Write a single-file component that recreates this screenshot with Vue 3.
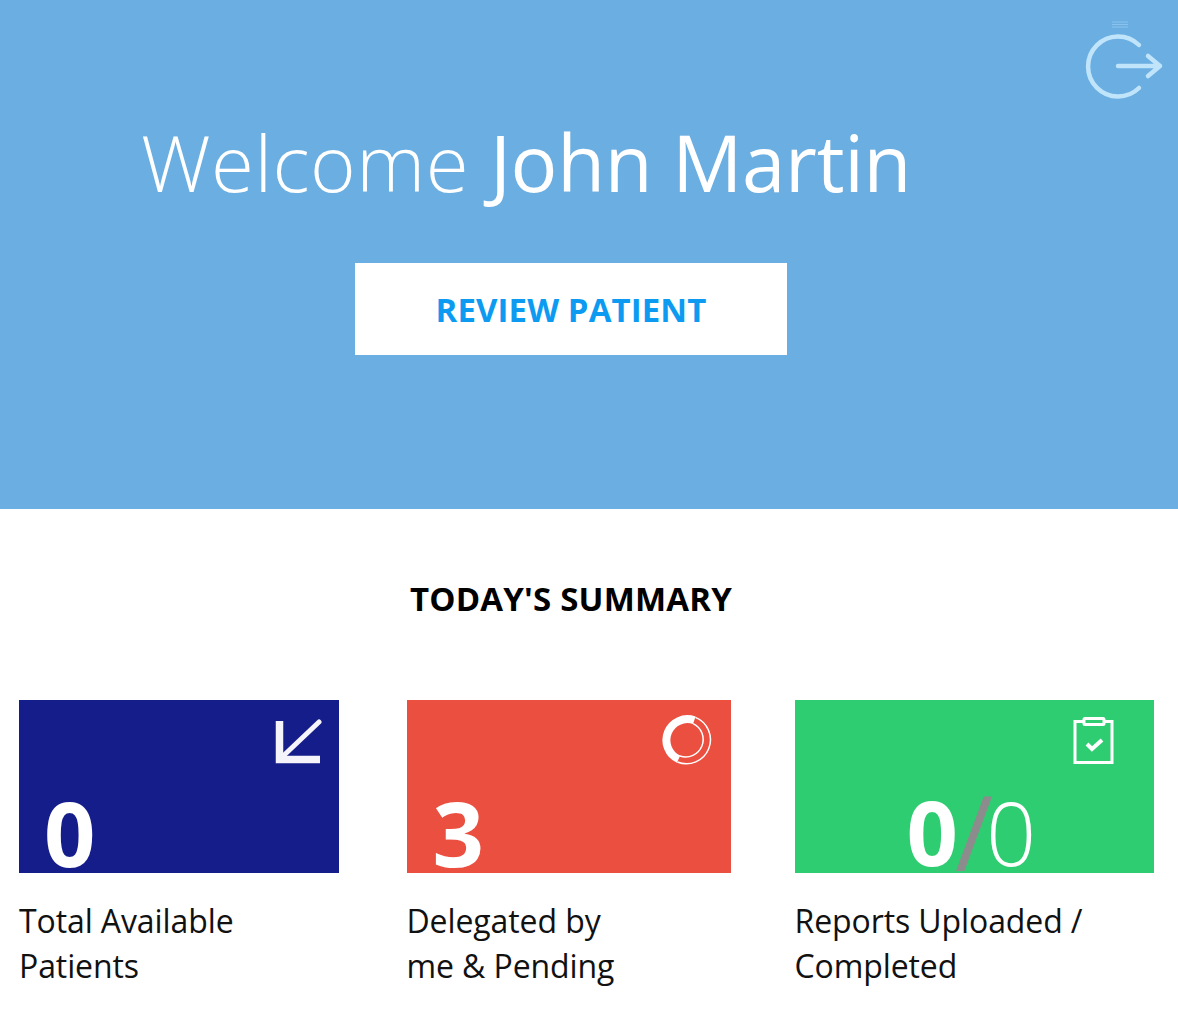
<script setup>
const cards = [
  { key: 'total', tone: 'card--navy', value: '0', label: ['Total Available', 'Patients'] },
  { key: 'delegated', tone: 'card--red', value: '3', label: ['Delegated by', 'me & Pending'] },
  { key: 'reports', tone: 'card--green', value: '0', total: '0', label: ['Reports Uploaded /', 'Completed'] },
]
</script>

<template>
  <div class="page">
    <header class="hero">
      <button class="logout" aria-label="Log out">
        <svg viewBox="0 -11 80 81" width="80" height="81" fill="none" stroke="#c0e4fa" stroke-width="4.5" stroke-linecap="round" stroke-linejoin="round">
          <path d="M28 -9H44M28 -6.5H44M28 -4H44" stroke="#8cc3ec" stroke-width="1" stroke-linecap="butt" />
          <path d="M55 14A30 30 0 1 0 55 57" />
          <path d="M34 35H76M64 25L76 35L64 45" />
        </svg>
      </button>
      <h1 class="welcome">Welcome <strong>John Martin</strong></h1>
      <a class="review">REVIEW PATIENT</a>
    </header>

    <section class="summary">
      <h2 class="summary-title">TODAY'S SUMMARY</h2>
      <div class="cards">
        <article v-for="card in cards" :key="card.key" class="col" :class="'col--' + card.key">
          <div class="card" :class="card.tone">
            <svg v-if="card.key === 'total'" class="icon icon--arrow" viewBox="0 0 48 46" fill="none" stroke="#f4f4fa">
              <path d="M45 3L6 40" stroke-width="5" stroke-linecap="round" />
              <path d="M5.5 2V40.5H46" stroke-width="7.5" />
            </svg>
            <svg v-else-if="card.key === 'delegated'" class="icon icon--ring" viewBox="0 0 50 50" fill="none" stroke="#fff">
              <path d="M32.3 5.3A21 21 0 0 0 16.6 44.2" stroke-width="8" />
              <path d="M31.1 8.6A17.5 17.5 0 0 1 18 41" stroke-width="1.5" />
              <path d="M33.4 2.4A24 24 0 0 1 15.4 47" stroke-width="1.5" />
            </svg>
            <svg v-else class="icon icon--clip" viewBox="0 0 42 48" fill="none" stroke="#fff" stroke-width="3">
              <path d="M10 5.5H2V46.5H39V5.5H32" />
              <rect x="11" y="2.5" width="20" height="6" rx="1" />
              <path d="M14 28L19 33L29 24" stroke-width="4" />
            </svg>

            <div class="count">
              <b>{{ card.value }}</b><template v-if="card.total"><span class="slash">/</span><span class="of">{{ card.total }}</span></template>
            </div>
          </div>
          <p class="label">
            <span v-for="line in card.label" :key="line">{{ line }}</span>
          </p>
        </article>
      </div>
    </section>
  </div>
</template>

<style scoped>
.page {
  width: 1178px;
  height: 1026px;
  overflow: hidden;
  background: #fff;
  font-family: "Open Sans", "Noto Sans", sans-serif;
}

.hero {
  position: relative;
  height: 509px;
  background: #6aaee2;
  color: #fff;
  padding-top: 110px;
  box-sizing: border-box;
}

.logout {
  position: absolute;
  top: 20px;
  left: 1084px;
  padding: 0;
  border: 0;
  background: none;
}
.logout svg {
  display: block;
}

.welcome {
  margin: 0 0 0 141px;
  font-size: 78px;
  font-weight: 300;
  line-height: 104px;
  letter-spacing: 0.5px;
  white-space: nowrap;
}
.welcome strong {
  font-weight: 400;
  letter-spacing: -0.3px;
}

.review {
  display: flex;
  align-items: center;
  justify-content: center;
  width: 432px;
  height: 92px;
  margin: 49px 0 0 355px;
  background: #fff;
  color: #0d9bf2;
  font-size: 33px;
  font-weight: 700;
  letter-spacing: 0.1px;
}

.summary-title {
  width: 1142px;
  margin: 0;
  padding-top: 68px;
  text-align: center;
  color: #000;
  font-size: 33px;
  font-weight: 700;
  line-height: 44px;
  letter-spacing: 0.2px;
}

.cards {
  display: grid;
  grid-template-columns: 387.5px 388px 359.5px;
  margin: 79px 0 0 19px;
}

.card {
  position: relative;
  height: 173px;
  color: #fff;
}

.card--navy { background: #151d8a; }
.card--red { background: #ea4f3f; }
.card--green { background: #2ecd71; }

.col--total .card { width: 320px; }
.col--delegated .card { width: 324.5px; }

.icon {
  position: absolute;
  display: block;
}
.icon--arrow { top: 19px; left: 255px; width: 48px; height: 46px; }
.icon--ring { top: 15px; left: 255.5px; width: 50px; height: 50px; }
.icon--clip { top: 16px; left: 278px; width: 42px; height: 48px; }

.count {
  position: absolute;
  bottom: 1px;
  left: 25px;
  display: flex;
  align-items: baseline;
  font-size: 90px;
  line-height: 80px;
  white-space: nowrap;
}
.col--delegated .count { left: 26px; }
.col--reports .count {
  left: 112px;
}
.count b {
  font-weight: 700;
}
.slash {
  position: relative;
  top: 5px;
  color: #8c8c8c;
  font-size: 104px;
  font-weight: 400;
  line-height: 80px;
  letter-spacing: -7px;
  margin-left: -3px;
}
.of {
  font-size: 88px;
  font-weight: 300;
}

.label {
  display: flex;
  flex-direction: column;
  margin: 25px 0 0;
  color: #111;
  font-size: 32px;
  line-height: 45px;
  letter-spacing: -0.1px;
  white-space: nowrap;
}
</style>
